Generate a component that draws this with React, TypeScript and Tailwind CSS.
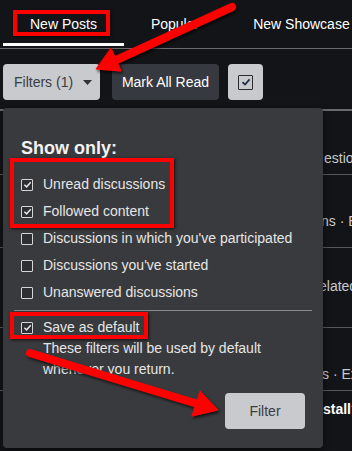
import React from "react";

function Box({ checked }: { checked: boolean }) {
  return (
    <span className="w-[12px] h-[12px] shrink-0 border-[1.5px] border-[#d4d5d7] rounded-[1px] flex items-center justify-center bg-[#2e2f32]">
      {checked && (
        <svg width="9" height="9" viewBox="0 0 10 10">
          <path d="M1.5 5.2 L4 7.6 L8.6 2.4" fill="none" stroke="#e6e6e6" strokeWidth="1.6" />
        </svg>
      )}
    </span>
  );
}

function Row({ label, checked }: { label: string; checked: boolean }) {
  return (
    <div className="h-[27px] flex items-center gap-[10px] text-[14px] text-[#e6e6e6]">
      <Box checked={checked} />
      <span className="whitespace-nowrap">{label}</span>
    </div>
  );
}

export default function App() {
  return (
    <div
      className="relative w-[352px] h-[451px] overflow-hidden bg-[#131417]"
      style={{ fontFamily: '"Liberation Sans", Arial, sans-serif' }}
    >
      {/* Tabs */}
      <div className="flex h-[49px] pl-[3px] border-b border-[#6a6b6e]">
        <div className="relative px-[27px] flex items-center text-[14px] text-white whitespace-nowrap">
          New Posts
          <div className="absolute left-0 right-0 bottom-[2px] h-[3px] bg-white" />
        </div>
        <div className="px-[27px] flex items-center text-[14px] text-white whitespace-nowrap">Popular</div>
        <div className="px-[27px] flex items-center text-[14px] text-white whitespace-nowrap">New Showcase</div>
      </div>

      {/* Toolbar */}
      <div className="flex items-center pl-[3px] pt-[15px] h-[51px]">
        <div className="h-[36px] w-[97px] rounded-[4px] bg-[#c8cacd] flex items-center pl-[11px] text-[14px] text-[#3a3d42] whitespace-nowrap">
          Filters (1)
          <svg className="ml-[10px]" width="9" height="5" viewBox="0 0 9 5">
            <path d="M0 0 H9 L4.5 5 Z" fill="#2f3236" />
          </svg>
        </div>
        <div className="ml-[12px] h-[36px] w-[107px] rounded-[4px] bg-[#363940] flex items-center justify-center text-[14px] text-white whitespace-nowrap">
          Mark All Read
        </div>
        <div className="ml-[9px] h-[36px] w-[35px] rounded-[4px] bg-[#c8cacd] flex items-center justify-center">
          <span className="w-[15px] h-[15px] border-[1.5px] border-[#2b2b2e] rounded-[1px] flex items-center justify-center">
            <svg width="10" height="10" viewBox="0 0 10 10">
              <path d="M1.5 5.2 L4 7.6 L8.6 2.4" fill="none" stroke="#1f2a44" strokeWidth="1.7" />
            </svg>
          </span>
        </div>
      </div>

      {/* Background list */}
      <div className="mt-[9px] border-t-2 border-[#6a6b6e] text-[14px] text-[#c9cacc]">
        <div className="h-[64px] border-b border-[#55575a] pt-[37px] pl-[324px] whitespace-nowrap">estions</div>
        <div className="h-[73px] border-b border-[#55575a] pt-[36px] pl-[321px] whitespace-nowrap">ns · Ex</div>
        <div className="h-[80px] border-b border-[#55575a] pt-[28px] pl-[319px] whitespace-nowrap">elated</div>
        <div className="h-[63px] border-b border-[#55575a] pt-[36px] pl-[322px] whitespace-nowrap">s · Ex</div>
        <div className="pt-[8px] pl-[323px] whitespace-nowrap text-[14px] font-bold text-white">stall?</div>
      </div>

      {/* Dropdown panel */}
      <div className="absolute left-[3px] top-[108px] w-[320px] h-[340px] rounded-[4px] bg-[#393a3d] shadow-[0_2px_6px_rgba(0,0,0,0.5)]">
        <div className="pt-[28px] px-[18px]">
          <div className="text-[18px] font-bold text-[#f2f2f2] leading-[24px]">Show only:</div>
          <div className="mt-[11px]">
            <Row label="Unread discussions" checked />
            <Row label="Followed content" checked />
            <Row label="Discussions in which you've participated" checked={false} />
            <Row label="Discussions you've started" checked={false} />
            <Row label="Unanswered discussions" checked={false} />
          </div>
        </div>
        <div className="mx-[11px] mt-[4px] h-px bg-[#8a8b8e]" />
        <div className="px-[18px] pt-[3px]">
          <Row label="Save as default" checked />
          <div className="-mt-[3px] pl-[22px] text-[14px] leading-[21px] text-[#e6e6e6]">
            These filters will be used by default
            <br />
            whenever you return.
          </div>
          <div className="flex justify-end mt-[13px]">
            <div className="w-[80px] h-[36px] rounded-[4px] bg-[#c8cacd] flex items-center justify-center text-[14px] text-[#3a3d42]">
              Filter
            </div>
          </div>
        </div>
      </div>

      {/* Red annotation boxes */}
      <div className="absolute left-[13px] top-[10px] w-[97px] h-[26px] border-[4px] border-[#ff0000] shadow-[1px_1px_3px_rgba(0,0,0,0.7)]" />
      <div className="absolute left-[10px] top-[158px] w-[164px] h-[70px] border-[4px] border-[#ff0000] shadow-[1px_1px_3px_rgba(0,0,0,0.7)]" />
      <div className="absolute left-[10px] top-[312px] w-[138px] h-[27px] border-[4px] border-[#ff0000] shadow-[1px_1px_3px_rgba(0,0,0,0.7)]" />

      {/* Arrows */}
      <svg className="absolute left-0 top-0" width="352" height="451" viewBox="0 0 352 451">
        <defs>
          <filter id="sh" x="-20%" y="-20%" width="140%" height="140%">
            <feDropShadow dx="1.5" dy="2" stdDeviation="1.5" floodColor="#000" floodOpacity="0.7" />
          </filter>
        </defs>
        <g filter="url(#sh)" fill="#ff0000" stroke="#ff0000">
          <line x1="232" y1="7" x2="114" y2="61" strokeWidth="8" strokeLinecap="round" />
          <polygon points="96,69 121,71 111,48" strokeWidth="1" strokeLinejoin="round" />
          <line x1="30" y1="353" x2="198" y2="404" strokeWidth="8" strokeLinecap="round" />
          <polygon points="218,410 192,416 200,391" strokeWidth="1" strokeLinejoin="round" />
        </g>
      </svg>
    </div>
  );
}
